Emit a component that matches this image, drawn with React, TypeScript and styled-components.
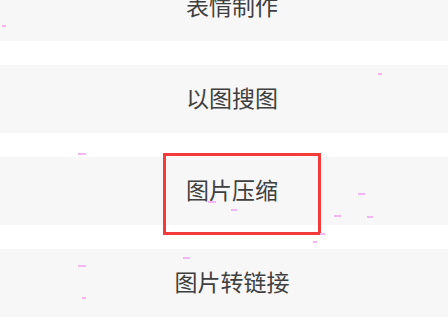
import React from "react";
import styled, { createGlobalStyle } from "styled-components";

const Global = createGlobalStyle`
  html, body { margin: 0; padding: 0; background: #ffffff; }
  body { width: 448px; height: 335px; overflow: hidden; }
`;

const Page = styled.div`
  position: relative;
  width: 448px;
  height: 335px;
  overflow: hidden;
  background: #ffffff;
`;

const List = styled.div`
  display: flex;
  flex-direction: column;
  gap: 24px;
  margin-top: -27px;
`;

const Row = styled.div`
  position: relative;
  height: 68px;
  box-sizing: border-box;
  padding: 0 0 4px 16px;
  display: flex;
  align-items: center;
  justify-content: center;
  background: #f7f7f7;
  color: #3f3f3f;
  font-family: "Noto Sans CJK SC", "Noto Sans", sans-serif;
  font-size: 23px;
  line-height: 1;
`;

const Highlight = styled.div`
  position: absolute;
  left: 163px;
  top: -4px;
  width: 158px;
  height: 82px;
  box-sizing: border-box;
  border: 3px solid #f43b3b;
  pointer-events: none;
`;

const Speck = styled.div<{ $w: number }>`
  position: absolute;
  height: 2px;
  width: ${(p) => p.$w}px;
  background: #f3b6f3;
`;

const items = ["表情制作", "以图搜图", "图片压缩", "图片转链接"];

const specks = [
  { x: 2, y: 25, w: 4 },
  { x: 378, y: 73, w: 4 },
  { x: 78, y: 153, w: 8 },
  { x: 208, y: 201, w: 8 },
  { x: 231, y: 209, w: 6 },
  { x: 334, y: 215, w: 7 },
  { x: 358, y: 193, w: 7 },
  { x: 367, y: 216, w: 6 },
  { x: 320, y: 233, w: 5 },
  { x: 313, y: 241, w: 4 },
  { x: 183, y: 257, w: 7 },
  { x: 78, y: 265, w: 8 },
  { x: 82, y: 297, w: 4 },
];

export default function App() {
  return (
    <Page>
      <Global />
      <List>
        {items.map((t, i) => (
          <Row key={t}>
            {t}
            {i === 2 && <Highlight />}
          </Row>
        ))}
      </List>
      {specks.map((s, i) => (
        <Speck key={i} $w={s.w} style={{ left: s.x, top: s.y }} />
      ))}
    </Page>
  );
}
